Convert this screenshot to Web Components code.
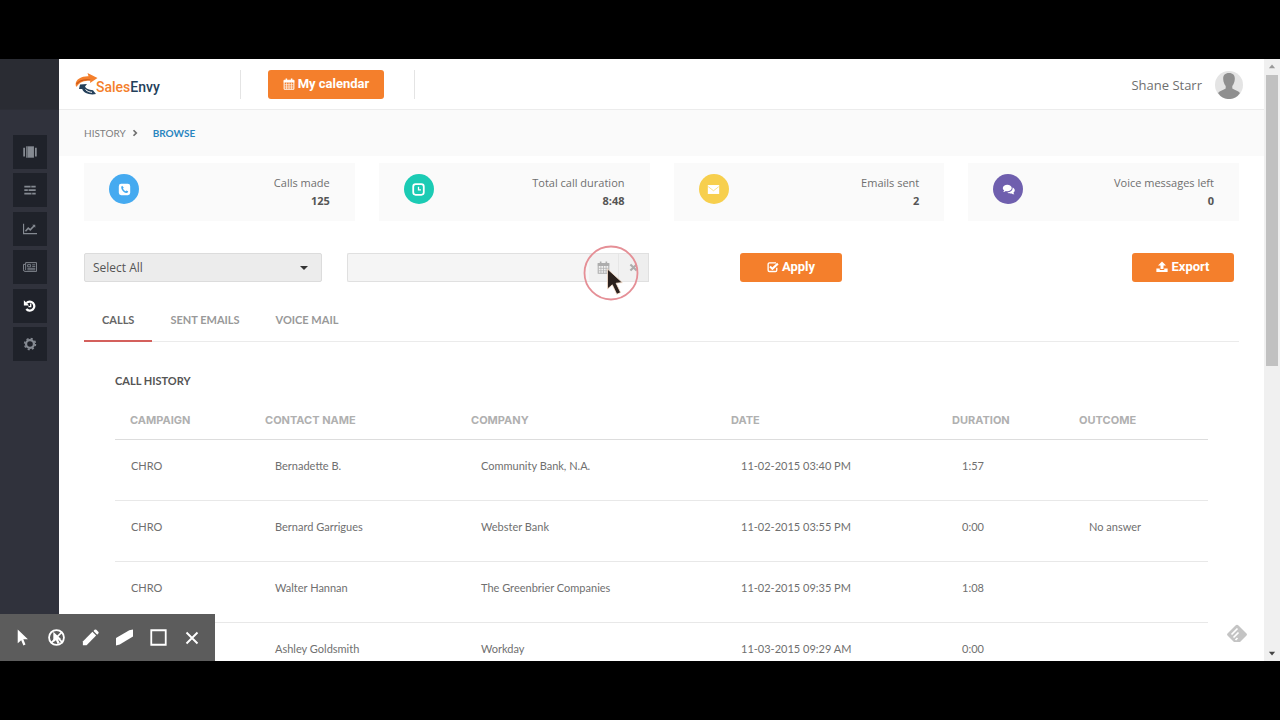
<!DOCTYPE html>
<html lang="en">
<head>
<meta charset="utf-8">
<title>SalesEnvy - History</title>
<style>
  body {
    margin: 0;
    background: #000;
    color: #6f6f6f;
    font: 11px/18px "Open Sans", "Noto Sans", sans-serif;
  }
</style>
</head>
<body>
<history-app></history-app>

<script>
// Icon drawings, all on a 16x16 grid
const ICONS = {
  book: '<path d="M3.500 1.500h9v13h-9z"/><path d="M1.300 3v10M14.700 3v10" stroke="currentColor" stroke-width="2"/><path d="M4.800 1.500v13" stroke="#1f222a" stroke-width=".5"/>',
  list: '<path d="M1.500 3h13v2h-13zM1.500 7h13v2h-13zM1.500 11h13v2h-13z"/><path d="M9 2.500v3M6 6.500v3M10 10.500v3" stroke="#1f222a" stroke-width=".8"/>',
  chart: '<path d="M0 2h1.3v10.7H16V14H0z"/><path d="M2.800 10.500 6 7l2.300 2L12.500 4.500" fill="none" stroke="currentColor" stroke-width="1.800"/><path d="M10.500 3H14v3.500z"/>',
  news: '<path d="M3 3h12.500v10H2.300A1.800 1.800 0 0 1 .5 11.200V5H3z" fill="none" stroke="currentColor" stroke-width="1.100"/><path d="M3 5v6.500M10.500 5.500h3.500M10.500 7.500h3.500M5 9.500h9M5 11.200h9" stroke="currentColor" stroke-width="1"/><path d="M5.300 5.300h3.400v2.500H5.300z" fill="none" stroke="currentColor" stroke-width="1"/>',
  history: '<path d="M4 4.500A5.200 5.200 0 1 1 3.800 11.500" fill="none" stroke="currentColor" stroke-width="2.600"/><path d="M1 1.500v6h6z"/><path d="M8.800 5v3.800H6.200" fill="none" stroke="currentColor" stroke-width="1.500"/>',
  cog: '<circle cx="8" cy="8" r="4.500" fill="none" stroke="currentColor" stroke-width="2.600"/><circle cx="8" cy="8" r="6.200" fill="none" stroke="currentColor" stroke-width="1.800" stroke-dasharray="2.435 2.435"/>',
  calendar: '<path d="M1.500 3h13v12h-13z" fill="none" stroke="currentColor" stroke-width="1.300"/><path d="M1 3h14v3H1zM3.500.5h2v3.500h-2zM10.500.5h2v3.500h-2z"/><path d="M2 9h12M2 12h12M4.800 6v9M8 6v9M11.200 6v9" stroke="currentColor" stroke-width=".9"/>',
  check: '<path d="M13 9v3.200a1.800 1.800 0 0 1-1.800 1.800H3.300a1.800 1.800 0 0 1-1.800-1.800V4.300a1.800 1.800 0 0 1 1.800-1.800H12" fill="none" stroke="currentColor" stroke-width="1.800"/><path d="m4 7.300 3.200 3.200L14.500 3.500" fill="none" stroke="currentColor" stroke-width="2.800"/>',
  upload: '<path d="M8 .5 13.300 6H10v4.500H6V6H2.700z"/><path d="M.5 10H5v2h6v-2h4.500v4.500H.5z"/>',
  times: '<path d="m3.500 3.500 9 9M12.500 3.500l-9 9" stroke="currentColor" stroke-width="3"/>',
  phone: '<path fill-rule="evenodd" d="M4 1h8a3 3 0 0 1 3 3v8a3 3 0 0 1-3 3H4a3 3 0 0 1-3-3V4a3 3 0 0 1 3-3zm1.200 2.500C3.800 4.300 3.500 6 4.800 8.200c1.300 2.200 3.400 3.800 5.400 4.200 1.300.2 2.300-.8 2.300-2.100l-2.200-1.200-1.200 1C8 9.500 6.600 8.200 6.100 6.900l1-1.100z"/>',
  clock: '<rect x="1.500" y="1.500" width="13" height="13" rx="3" fill="none" stroke="currentColor" stroke-width="2.200"/><path d="M8 4.500V8.500H11" fill="none" stroke="currentColor" stroke-width="1.600"/>',
  mail: '<path d="M1 2.500h14v11H1z"/><path d="m1.500 4.500 6.500 5 6.500-5" fill="none" stroke="#f7cf4d" stroke-width=".8"/>',
  chat: '<path d="M6.500 2C9.500 2 12 3.700 12 6s-2.500 4-5.500 4c-.6 0-1.200 0-1.700-.2C3.800 10.600 2.700 11 1.500 11c.6-.6 1.100-1.200 1.200-2C1.600 8.300 1 7.200 1 6c0-2.300 2.500-4 5.500-4z"/><path d="M13 5.500c1.800.7 2.700 2 2.700 3.500 0 1.200-.6 2.200-1.700 2.900.2.800.6 1.400 1.200 2-1.300 0-2.400-.4-3.400-1.100-2 .4-4.100 0-5.300-1.300C10.500 11.500 13.500 9 13 5.500z"/>',
  pointer: '<path d="M3.500.5v13l3.300-3 2 5 2-.9-2-4.900h4.300z"/>',
  spotlight: '<circle cx="8" cy="8" r="7" fill="none" stroke="currentColor" stroke-width="1.700"/><path d="m3 13 10-10M10 9l4 4" stroke="currentColor" stroke-width="1.500"/><path d="M5 2.500v10l2.500-2 1.500 3.500 2-.8-1.700-3.500h3.200z"/>',
  pencil: '<path d="m.8 11.700 9-9 3.500 3.500-9 9H.8z"/><path d="m10.800 1.800 1-1a1.200 1.200 0 0 1 1.700 0l1.800 1.800a1.200 1.200 0 0 1 0 1.700l-1 1z"/>',
  eraser: '<path d="M0 8.500 12.500 1.200 16 .5v6.500L3.500 14.500 0 15.500z"/>',
  square: '<path d="M1.200 1.200h13.600v13.600H1.200z" fill="none" stroke="currentColor" stroke-width="1.700"/>',
  close: '<path d="m2.500 2.500 11 11M13.500 2.500l-11 11" stroke="currentColor" stroke-width="1.900"/>',
  chevron: '<path d="m5 2.500 5.500 5.500L5 13.500" fill="none" stroke="currentColor" stroke-width="3.500"/>',
  up: '<path d="m8 4 5 6H3z"/>',
  down: '<path d="m8 12 5-6H3z"/>'
};

class UiIcon extends HTMLElement {
  constructor() {
    super();
    this.attachShadow({ mode: 'open' });
  }

  connectedCallback() {
    this.shadowRoot.innerHTML = `
      <style>
        :host {
          display: inline-flex;
          width: var(--icon-size, 14px);
          height: var(--icon-size, 14px);
        }
        svg { width: 100%; height: 100%; }
      </style>
      <svg viewBox="0 0 16 16" fill="currentColor" aria-hidden="true">${ICONS[this.getAttribute('name')]}</svg>
    `;
  }
}
customElements.define('ui-icon', UiIcon);

// Orange action button
class ActionButton extends HTMLElement {
  constructor() {
    super();
    this.attachShadow({ mode: 'open' });
  }

  connectedCallback() {
    this.shadowRoot.innerHTML = `
      <style>
        :host { display: inline-flex; }
        button {
          display: flex;
          align-items: center;
          justify-content: center;
          gap: 3px;
          min-width: var(--button-width, 102px);
          height: 29px;
          padding: 0 14px 1px;
          border: 0;
          border-radius: 3px;
          background: #f47f2c;
          color: #fff;
          font: bold 13px/18px Roboto, sans-serif;
          cursor: pointer;
          --icon-size: 12px;
        }
      </style>
      <button type="button"><ui-icon name="${this.getAttribute('icon')}"></ui-icon><slot></slot></button>
    `;
  }
}
customElements.define('action-button', ActionButton);

class SideNav extends HTMLElement {
  constructor() {
    super();
    this.attachShadow({ mode: 'open' });
  }

  connectedCallback() {
    const items = [
      ['book', 'Contacts'], ['list', 'Campaigns'], ['chart', 'Reports'],
      ['news', 'Templates'], ['history', 'History'], ['cog', 'Settings']
    ];
    this.shadowRoot.innerHTML = `
      <style>
        :host {
          display: block;
          flex: none;
          width: 59px;
          background: #30323c;
        }
        .top {
          height: 50px;
          background: #2a2c33;
          border-bottom: 1px solid #2c2e36;
        }
        nav {
          display: flex;
          flex-direction: column;
          align-items: center;
          justify-content: space-between;
          height: 226px;
          margin-top: 25px;
        }
        a {
          display: flex;
          align-items: center;
          justify-content: center;
          width: 34px;
          height: 34px;
          background: #1f222a;
          color: #858a92;
        }
        a.active { color: #fff; }
      </style>
      <div class="top"></div>
      <nav>
        ${items.map(([icon, label]) => `
          <a href="#" aria-label="${label}" class="${icon === 'history' ? 'active' : ''}"><ui-icon name="${icon}"></ui-icon></a>
        `).join('')}
      </nav>
    `;
  }
}
customElements.define('side-nav', SideNav);

class TopBar extends HTMLElement {
  constructor() {
    super();
    this.attachShadow({ mode: 'open' });
  }

  connectedCallback() {
    this.shadowRoot.innerHTML = `
      <style>
        :host {
          display: flex;
          align-items: center;
          height: 50px;
          padding: 0 21px 0 16px;
          border-bottom: 1px solid #ececec;
        }
        .logo {
          display: flex;
          align-items: center;
          width: 165px;
          color: #f47f2c;
          font: 500 14px/18px Roboto, sans-serif;
          text-decoration: none;
        }
        .logo svg { width: 24px; height: 24px; margin-right: -3px; }
        .logo span { padding-top: 6px; }
        .logo b { font-weight: 500; color: #24405a; }
        .calendar {
          padding: 0 30px 0 27px;
          border: solid #e4e4e4;
          border-width: 0 1px;
          --button-width: 116px;
        }
        .user {
          display: flex;
          align-items: center;
          gap: 13px;
          margin-left: auto;
          padding-top: 2px;
          font-size: 13px;
        }
        .user svg { width: 28px; height: 28px; }
      </style>
      <a class="logo" href="#">
        <svg viewBox="0 0 24 24" aria-hidden="true">
          <path d="M1 14.500C-1 8 6 4 13.500 4.300L12.500 1 22.500 6 15 11l.3-2.500C9 8.500 4 10.500 2 14.500z" fill="#f47f2c"/>
          <path d="M1.500 12C5 8 10 7.300 15.300 8" fill="none" stroke="#c9581b" stroke-width="1.200"/>
          <path d="M5 12.500 12 12l-2 2.500c1 2 3.500 3.500 8 3.800l3 3.700c-6 1.500-12.500-1-13.800-5L4 17z" fill="#24405a"/>
          <path d="M10.500 17.500c2 2 4.500 2.800 6.500 2.800" fill="none" stroke="#fff" stroke-width="1"/>
        </svg>
        <span>Sales<b>Envy</b></span>
      </a>
      <div class="calendar"><action-button icon="calendar">My calendar</action-button></div>
      <div class="user">
        Shane Starr
        <svg viewBox="0 0 28 28" aria-hidden="true">
          <circle cx="14" cy="14" r="14" fill="#e4e4e4"/>
          <path d="M14 2c4.200 0 6 2.500 5.800 6-.1 3-1.300 5.500-2.500 7v2.500c2 1.500 6 2 7.700 4.500A13 13 0 0 1 3 22c1.700-2.500 5.700-3 7.700-4.500V15c-1.200-1.500-2.400-4-2.500-7C8 4.500 9.800 2 14 2z" fill="#8f8f8f"/>
        </svg>
      </div>
    `;
  }
}
customElements.define('top-bar', TopBar);

class BreadCrumb extends HTMLElement {
  constructor() {
    super();
    this.attachShadow({ mode: 'open' });
  }

  connectedCallback() {
    this.shadowRoot.innerHTML = `
      <style>
        :host {
          display: block;
          padding: 14px 25px;
          background: #fafafa;
          --icon-size: 8px;
        }
        nav { display: flex; align-items: center; gap: 5px; font: 10px/18px Lato, sans-serif; }
        a { color: #7d7d7d; text-decoration: none; }
        a.current { margin-left: 9px; color: #2a86c0; font-weight: bold; }
      </style>
      <nav>
        <a href="#">HISTORY</a>
        <ui-icon name="chevron"></ui-icon>
        <a href="#" class="current">BROWSE</a>
      </nav>
    `;
  }
}
customElements.define('bread-crumb', BreadCrumb);

class StatCard extends HTMLElement {
  constructor() {
    super();
    this.attachShadow({ mode: 'open' });
  }

  connectedCallback() {
    this.shadowRoot.innerHTML = `
      <style>
        :host {
          display: flex;
          justify-content: space-between;
          padding: 11px 25px;
          background: #fafafa;
          --icon-size: 13px;
        }
        .circle {
          display: flex;
          align-items: center;
          justify-content: center;
          width: 30px;
          height: 30px;
          border-radius: 50%;
          background: ${this.getAttribute('color')};
          color: #fff;
        }
        .text { text-align: right; }
        b { display: block; color: #555; }
      </style>
      <div class="circle"><ui-icon name="${this.getAttribute('icon')}"></ui-icon></div>
      <div class="text"><slot></slot><b>${this.getAttribute('value')}</b></div>
    `;
  }
}
customElements.define('stat-card', StatCard);

class FilterBar extends HTMLElement {
  constructor() {
    super();
    this.attachShadow({ mode: 'open' });
  }

  connectedCallback() {
    this.shadowRoot.innerHTML = `
      <style>
        :host { display: flex; padding-right: 5px; }
        .select {
          display: flex;
          align-items: center;
          position: relative;
          width: 238px;
          margin-right: 25px;
        }
        select {
          appearance: none;
          width: 100%;
          height: 29px;
          padding: 0 8px;
          border: 1px solid #dcdcdc;
          border-radius: 2px;
          background: #ececec;
          color: #555;
          font: 12px/18px "Open Sans", sans-serif;
        }
        .caret {
          position: absolute;
          right: 14px;
          border: 4px solid transparent;
          border-top-color: #333;
          border-bottom: 0;
        }
        .date { display: flex; position: relative; width: 302px; margin-right: 91px; }
        input {
          flex: 1;
          min-width: 0;
          box-sizing: border-box;
          height: 29px;
          border: 1px solid #e0e0e0;
          border-right: 0;
          border-radius: 2px 0 0 2px;
          background: #f5f5f5;
        }
        .date button {
          display: flex;
          align-items: center;
          justify-content: center;
          width: 30px;
          height: 29px;
          padding: 0;
          border: 1px solid #e0e0e0;
          border-left: 0;
          background: #eee;
          color: #999;
          --icon-size: 13px;
        }
        .date .clear { --icon-size: 11px; }
        .cursor {
          position: absolute;
          right: 10px;
          top: -8px;
          width: 56px;
          height: 56px;
        }
        .export { margin-left: auto; }
      </style>
      <div class="select">
        <select aria-label="Campaign"><option>Select All</option></select>
        <span class="caret"></span>
      </div>
      <div class="date">
        <input type="text" aria-label="Date range">
        <button type="button" aria-label="Pick date"><ui-icon name="calendar"></ui-icon></button>
        <button type="button" class="clear" aria-label="Clear date"><ui-icon name="times"></ui-icon></button>
        <svg class="cursor" viewBox="0 0 56 56" aria-hidden="true">
          <circle cx="28" cy="28" r="26.500" fill="#fff" fill-opacity=".2" stroke="#e58f96" stroke-width="1.800"/>
          <path d="M24.500 24v20l4.800-4.200 4.500 9.500 3.800-1.800-4.500-9.300 6.200-.6z" fill="#2b211d" stroke="#fbe3cf" stroke-width=".8"/>
        </svg>
      </div>
      <action-button icon="check">Apply</action-button>
      <action-button class="export" icon="upload">Export</action-button>
    `;
  }
}
customElements.define('filter-bar', FilterBar);

class TabList extends HTMLElement {
  constructor() {
    super();
    this.attachShadow({ mode: 'open' });
  }

  connectedCallback() {
    const tabs = this.getAttribute('tabs').split(',');
    this.shadowRoot.innerHTML = `
      <style>
        :host { display: flex; border-bottom: 1px solid #ebebeb; }
        button {
          padding: 12px 18px 11px;
          margin-bottom: -1px;
          border: 0;
          border-bottom: 2px solid transparent;
          background: none;
          color: #999;
          font: bold 11px/18px Lato, sans-serif;
          cursor: pointer;
        }
        button[aria-selected="true"] { border-bottom-color: #d4605c; color: #666; }
      </style>
      ${tabs.map((tab, i) => `<button type="button" role="tab" aria-selected="${i === 0}">${tab}</button>`).join('')}
    `;
    this.setAttribute('role', 'tablist');
  }
}
customElements.define('tab-list', TabList);

const calls = [
  ['CHRO', 'Bernadette B.', 'Community Bank, N.A.', '11-02-2015 03:40 PM', '1:57', ''],
  ['CHRO', 'Bernard Garrigues', 'Webster Bank', '11-02-2015 03:55 PM', '0:00', 'No answer'],
  ['CHRO', 'Walter Hannan', 'The Greenbrier Companies', '11-02-2015 09:35 PM', '1:08', ''],
  ['', 'Ashley Goldsmith', 'Workday', '11-03-2015 09:29 AM', '0:00', '']
];

class CallTable extends HTMLElement {
  constructor() {
    super();
    this.attachShadow({ mode: 'open' });
  }

  connectedCallback() {
    const heads = ['CAMPAIGN', 'CONTACT NAME', 'COMPANY', 'DATE', 'DURATION', 'OUTCOME'];
    const widths = [135, 206, 260, 221, 127, 144];
    this.shadowRoot.innerHTML = `
      <style>
        :host { display: block; padding: 30px 31px 0; }
        h2 { margin: 0; color: #555; font: bold 11px/18px Lato, sans-serif; }
        table {
          width: 100%;
          margin-top: 11px;
          border-collapse: collapse;
          table-layout: fixed;
          text-align: left;
        }
        th {
          padding: 10px 15px;
          border-bottom: 1px solid #ddd;
          color: #b0b0b0;
          font: 700 11px/18px Inter, sans-serif;
        }
        td {
          height: 61px;
          padding: 0 0 8px 25px;
          box-sizing: border-box;
          border-bottom: 1px solid #e8e8e8;
          font: 11px/18px Lato, sans-serif;
        }
        td:first-child { padding-left: 16px; }
      </style>
      <h2>CALL HISTORY</h2>
      <table>
        <colgroup>${widths.map(w => `<col style="width: ${w}px">`).join('')}</colgroup>
        <thead><tr>${heads.map(h => `<th>${h}</th>`).join('')}</tr></thead>
        <tbody>
          ${calls.map(row => `<tr>${row.map(cell => `<td>${cell}</td>`).join('')}</tr>`).join('')}
        </tbody>
      </table>
    `;
  }
}
customElements.define('call-table', CallTable);

class ScrollTrack extends HTMLElement {
  constructor() {
    super();
    this.attachShadow({ mode: 'open' });
    this.shadowRoot.innerHTML = `
      <style>
        :host {
          display: flex;
          flex-direction: column;
          align-items: center;
          flex: none;
          width: 16px;
          background: #f0f0f0;
          color: #444;
          --icon-size: 10px;
        }
        .arrow { display: flex; align-items: center; height: 16px; }
        .arrow.off { color: #999; }
        .track { flex: 1; }
        .thumb { width: 12px; height: 51%; background: #c1c1c1; }
      </style>
      <div class="arrow off"><ui-icon name="up"></ui-icon></div>
      <div class="track"><div class="thumb"></div></div>
      <div class="arrow"><ui-icon name="down"></ui-icon></div>
    `;
  }
}
customElements.define('scroll-track', ScrollTrack);

// Screen drawing tools that float over the page
class DrawToolbar extends HTMLElement {
  constructor() {
    super();
    this.attachShadow({ mode: 'open' });
  }

  connectedCallback() {
    const tools = ['pointer', 'spotlight', 'pencil', 'eraser', 'square', 'close'];
    this.shadowRoot.innerHTML = `
      <style>
        :host {
          display: flex;
          padding: 0 6px 0 5px;
          background: #5c5c5c;
          --icon-size: 17px;
        }
        button {
          display: flex;
          align-items: center;
          justify-content: center;
          width: 34px;
          height: 47px;
          padding: 0;
          border: 0;
          background: none;
          color: #fff;
        }
        button:first-child, button:last-child { --icon-size: 16px; }
      </style>
      ${tools.map(tool => `<button type="button" aria-label="${tool}"><ui-icon name="${tool}"></ui-icon></button>`).join('')}
    `;
  }
}
customElements.define('draw-toolbar', DrawToolbar);

class HistoryApp extends HTMLElement {
  constructor() {
    super();
    this.attachShadow({ mode: 'open' });
    this.shadowRoot.innerHTML = `
      <style>
        :host {
          display: flex;
          box-sizing: border-box;
          height: 100vh;
          padding: 59px 0;
        }
        .window {
          display: flex;
          flex: 1;
          position: relative;
          overflow: hidden;
          background: #fff;
        }
        main { flex: 1; min-width: 0; overflow: hidden; }
        .content { padding: 7px 25px 0; }
        .stats {
          display: grid;
          grid-template-columns: repeat(4, 1fr);
          gap: 24px;
          margin-bottom: 32px;
        }
        filter-bar { margin-bottom: 17px; }
        draw-toolbar { position: absolute; left: 0; bottom: 0; }
        .feed {
          position: absolute;
          right: 32px;
          bottom: 17px;
          width: 22px;
          height: 20px;
        }
      </style>
      <div class="window">
        <side-nav></side-nav>
        <main>
          <top-bar></top-bar>
          <bread-crumb></bread-crumb>
          <div class="content">
            <div class="stats">
              <stat-card icon="phone" color="#45aaf0" value="125">Calls made</stat-card>
              <stat-card icon="clock" color="#1bcbb4" value="8:48">Total call duration</stat-card>
              <stat-card icon="mail" color="#f7cf4d" value="2">Emails sent</stat-card>
              <stat-card icon="chat" color="#6f5fae" value="0">Voice messages left</stat-card>
            </div>
            <filter-bar></filter-bar>
            <tab-list tabs="CALLS,SENT EMAILS,VOICE MAIL"></tab-list>
            <call-table></call-table>
          </div>
        </main>
        <scroll-track></scroll-track>
        <draw-toolbar></draw-toolbar>
        <svg class="feed" viewBox="0 0 22 20" aria-hidden="true">
          <path d="M9.500 1.500a2 2 0 0 1 3 0l8 8a1.500 1.500 0 0 1 0 2L14 18H8l-6.500-6.500a1.500 1.500 0 0 1 0-2z" fill="#c4c4c4"/>
          <path d="m5.500 10.500 6-6M7.500 13.500l5-5M9.500 16l2-2" stroke="#fff" stroke-width="1.700"/>
        </svg>
      </div>
    `;
  }
}
customElements.define('history-app', HistoryApp);
</script>
</body>
</html>
